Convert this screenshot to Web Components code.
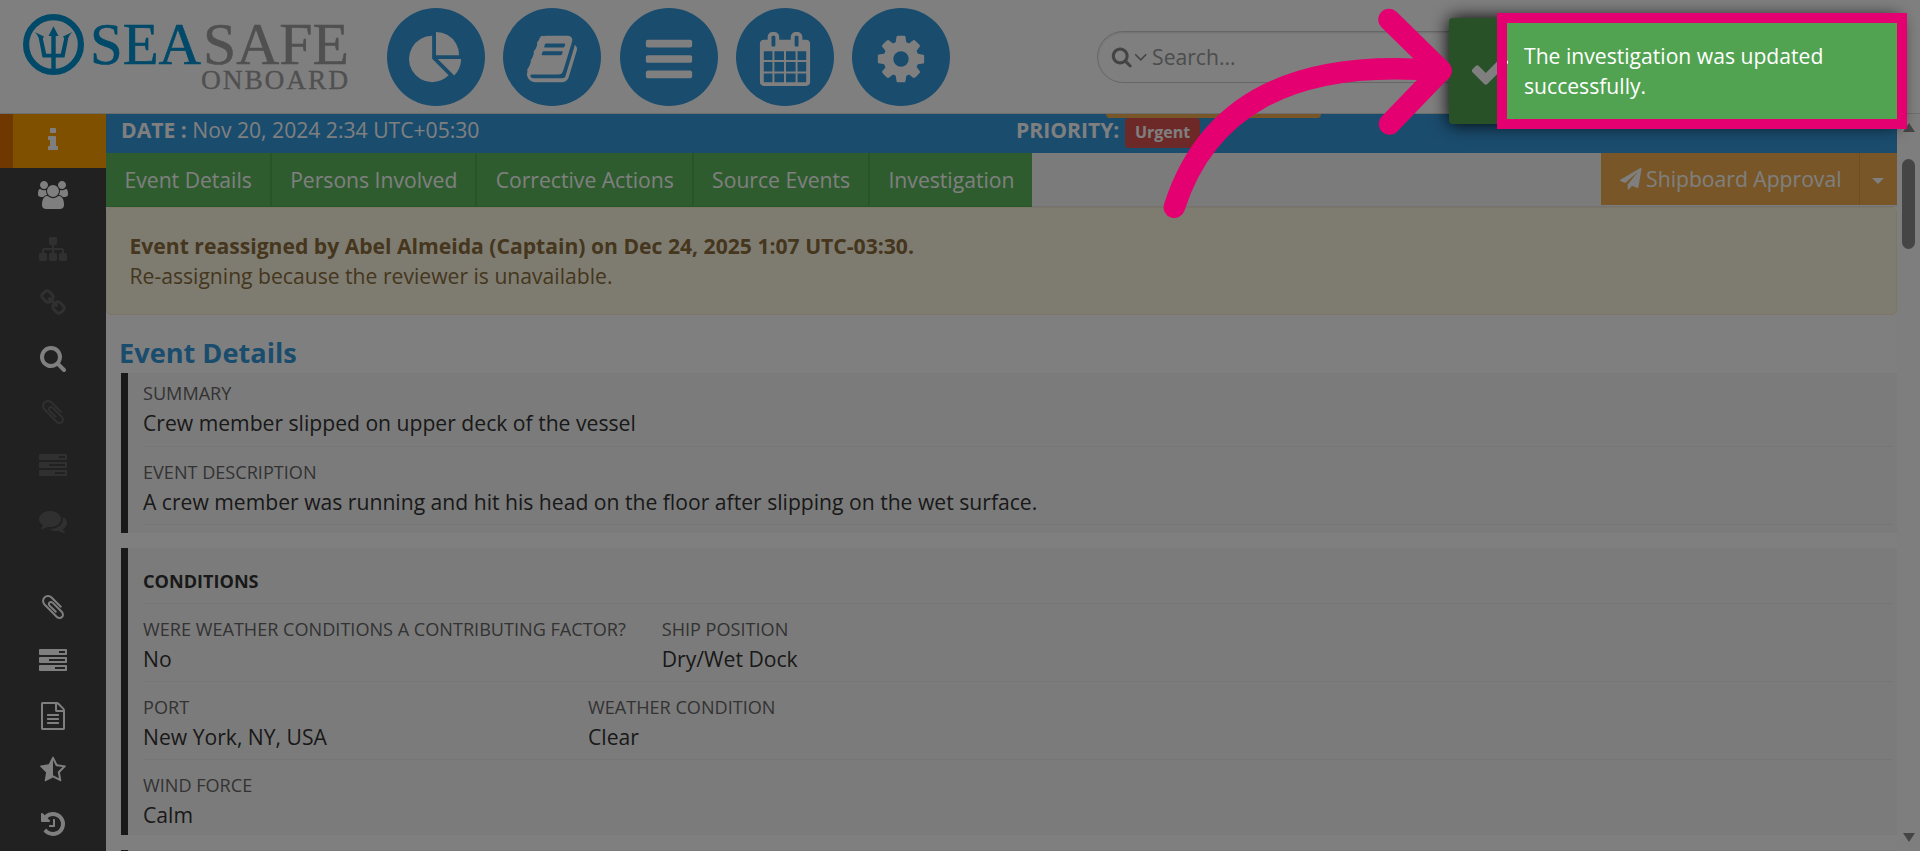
<!DOCTYPE html>
<html lang="en">
<head>
<meta charset="utf-8">
<title>SeaSafe Onboard</title>
<style>
  html, body {
    margin: 0;
    height: 100%;
    overflow: hidden;
  }
  body {
    font-family: "Open Sans", sans-serif;
    font-size: 21.13px;
    color: #333;
    background: #fff;
  }
</style>
</head>
<body>
<event-page></event-page>

<script>
// Icon outlines on a 1792 unit grid
const ICONS = {
  pie: 'M768 890l546 546q-106 108-247.5 168t-298.5 60q-209 0-385.5-103t-279.5-279.5-103-385.5 103-385.5 279.5-279.5 385.5-103v762zm187 6h773q0 157-60 298.5t-168 247.5zm709-128h-768v-768q209 0 385.5 103t279.5 279.5 103 385.5z',
  book: 'M1703 478q40 57 18 129l-275 906q-19 64-76.5 107.5t-122.5 43.5h-923q-77 0-148.5-53.5t-99.5-131.5q-24-67-2-127 0-4 3-27t4-37q1-8-3-21.5t-3-19.5q2-11 8-21t16.5-23.5 16.5-23.5q23-38 45-91.5t30-91.5q3-10 .5-30t-.5-28q3-11 17-28t17-23q21-36 42-92t25-90q1-9-2.5-32t.5-28q4-13 22-30.5t22-22.5q19-26 42.5-84.5t27.5-96.5q1-8-3-25.5t-2-26.5q2-8 9-18t18-23 17-21q8-12 16.5-30.5t15-35 16-36 19.5-32 26.5-23.5 36-11.5 47.5 5.5l-1 3q38-9 51-9h761q74 0 114 56t18 130l-274 906q-36 119-71.5 153.5t-128.5 34.5h-869q-27 0-38 15-11 16-1 43 24 70 144 70h923q29 0 56-15.5t35-41.5l300-987q7-22 5-57 38 15 59 43zm-1064 2q-4 13 2 22.5t20 9.5h608q13 0 25.5-9.5t16.5-22.5l21-64q4-13-2-22.5t-20-9.5h-608q-13 0-25.5 9.5t-16.5 22.5zm-83 256q-4 13 2 22.5t20 9.5h608q13 0 25.5-9.5t16.5-22.5l21-64q4-13-2-22.5t-20-9.5h-608q-13 0-25.5 9.5t-16.5 22.5z',
  bars: 'M1664 1344v128q0 26-19 45t-45 19h-1408q-26 0-45-19t-19-45v-128q0-26 19-45t45-19h1408q26 0 45 19t19 45zm0-512v128q0 26-19 45t-45 19h-1408q-26 0-45-19t-19-45v-128q0-26 19-45t45-19h1408q26 0 45 19t19 45zm0-512v128q0 26-19 45t-45 19h-1408q-26 0-45-19t-19-45v-128q0-26 19-45t45-19h1408q26 0 45 19t19 45z',
  calendar: 'M192 1664h288v-288h-288v288zm352 0h320v-288h-320v288zm-352-352h288v-320h-288v320zm352 0h320v-320h-320v320zm-352-384h288v-288h-288v288zm736 736h320v-288h-320v288zm-384-736h320v-288h-320v288zm768 736h288v-288h-288v288zm-384-352h320v-320h-320v320zm-352-864v-288q0-13-9.5-22.5t-22.5-9.5h-64q-13 0-22.5 9.5t-9.5 22.5v288q0 13 9.5 22.5t22.5 9.5h64q13 0 22.5-9.5t9.5-22.5zm736 864h288v-320h-288v320zm-384-384h320v-288h-320v288zm384 0h288v-288h-288v288zm32-480v-288q0-13-9.5-22.5t-22.5-9.5h-64q-13 0-22.5 9.5t-9.5 22.5v288q0 13 9.5 22.5t22.5 9.5h64q13 0 22.5-9.5t9.5-22.5zm384-64v1280q0 52-38 90t-90 38h-1408q-52 0-90-38t-38-90v-1280q0-52 38-90t90-38h128v-96q0-66 47-113t113-47h64q66 0 113 47t47 113v96h384v-96q0-66 47-113t113-47h64q66 0 113 47t47 113v96h128q52 0 90 38t38 90z',
  cog: 'M1152 896q0-106-75-181t-181-75-181 75-75 181 75 181 181 75 181-75 75-181zm512-109v222q0 12-8 23t-20 13l-185 28q-19 54-39 91 35 50 107 138 10 12 10 25t-9 23q-27 37-99 108t-94 71q-12 0-26-9l-138-108q-44 23-91 38-16 136-29 186-7 28-36 28h-222q-14 0-24.5-8.5t-11.5-21.5l-28-184q-49-16-90-37l-141 107q-10 9-25 9-14 0-25-11-126-114-165-168-7-10-7-23 0-12 8-23 15-21 51-66.5t54-70.5q-27-50-41-99l-183-27q-13-2-21-12.5t-8-23.5v-222q0-12 8-23t19-13l186-28q14-46 39-92-40-57-107-138-10-12-10-24 0-10 9-23 26-36 98.5-107.5t94.5-71.5q13 0 26 10l138 107q44-23 91-38 16-136 29-186 7-28 36-28h222q14 0 24.5 8.5t11.5 21.5l28 184q49 16 90 37l142-107q9-9 24-9 13 0 25 10 129 119 165 170 7 8 7 22 0 12-8 23-15 21-51 66.5t-54 70.5q26 50 41 98l183 28q13 2 21 12.5t8 23.5z',
  info: 'M1216 1344v128q0 26-19 45t-45 19h-512q-26 0-45-19t-19-45v-128q0-26 19-45t45-19h64v-384h-64q-26 0-45-19t-19-45v-128q0-26 19-45t45-19h384q26 0 45 19t19 45v576h64q26 0 45 19t19 45zm-128-1152v192q0 26-19 45t-45 19h-256q-26 0-45-19t-19-45v-192q0-26 19-45t45-19h256q26 0 45 19t19 45z',
  users: 'M529 896q-162 5-265 128h-134q-82 0-138-40.5t-56-118.5q0-353 124-353 6 0 43.5 21t97.5 42.5 119 21.5q67 0 133-23-5 37-5 66 0 139 81 256zm1071 637q0 120-73 189.5t-194 69.5h-874q-121 0-194-69.5t-73-189.5q0-53 3.5-103.5t14-109 26.5-108.5 43-97.5 62-81 85.5-53.5 111.5-20q10 0 43 21.5t73 48 107 48 135 21.5 135-21.5 107-48 73-48 43-21.5q61 0 111.5 20t85.5 53.5 62 81 43 97.5 26.5 108.5 14 109 3.5 103.5zm-1024-1277q0 106-75 181t-181 75-181-75-75-181 75-181 181-75 181 75 75 181zm704 384q0 159-112.5 271.5t-271.5 112.5-271.5-112.5-112.5-271.5 112.5-271.5 271.5-112.5 271.5 112.5 112.5 271.5zm576 225q0 78-56 118.5t-138 40.5h-134q-103-123-265-128 81-117 81-256 0-29-5-66 66 23 133 23 59 0 119-21.5t97.5-42.5 43.5-21q124 0 124 353zm-128-609q0 106-75 181t-181 75-181-75-75-181 75-181 181-75 181 75 75 181z',
  sitemap: 'M1792 1248v320q0 40-28 68t-68 28h-320q-40 0-68-28t-28-68v-320q0-40 28-68t68-28h96v-192h-512v192h96q40 0 68 28t28 68v320q0 40-28 68t-68 28h-320q-40 0-68-28t-28-68v-320q0-40 28-68t68-28h96v-192h-512v192h96q40 0 68 28t28 68v320q0 40-28 68t-68 28h-320q-40 0-68-28t-28-68v-320q0-40 28-68t68-28h96v-192q0-52 38-90t90-38h512v-192h-96q-40 0-68-28t-28-68v-320q0-40 28-68t68-28h320q40 0 68 28t28 68v320q0 40-28 68t-68 28h-96v192h512q52 0 90 38t38 90v192h96q40 0 68 28t28 68z',
  link: 'M1520 1216q0-40-28-68l-208-208q-28-28-68-28-42 0-72 32 3 3 19 18.5t21.5 21.5 15 19 13 25.5 3.5 27.5q0 40-28 68t-68 28q-15 0-27.5-3.5t-25.5-13-19-15-21.5-21.5-18.5-19q-33 31-33 73 0 40 28 68l206 207q27 27 68 27 40 0 68-26l147-146q28-28 28-67zm-703-705q0-40-28-68l-206-207q-28-28-68-28-39 0-68 27l-147 146q-28 28-28 67 0 40 28 68l208 208q27 27 68 27 42 0 72-31-3-3-19-18.5t-21.5-21.5-15-19-13-25.5-3.5-27.5q0-40 28-68t68-28q15 0 27.5 3.5t25.5 13 19 15 21.5 21.5 18.5 19q33-31 33-73zm895 705q0 120-85 203l-147 146q-83 83-203 83-121 0-204-85l-206-207q-83-83-83-203 0-123 88-209l-88-88q-86 88-208 88-120 0-204-84l-208-208q-84-84-84-204t85-203l147-146q83-83 203-83 121 0 204 85l206 207q83 83 83 203 0 123-88 209l88 88q86-88 208-88 120 0 204 84l208 208q84 84 84 204z',
  search: 'M1216 832q0-185-131.5-316.5t-316.5-131.5-316.5 131.5-131.5 316.5 131.5 316.5 316.5 131.5 316.5-131.5 131.5-316.5zm512 832q0 52-38 90t-90 38q-54 0-90-38l-343-342q-179 124-399 124-143 0-273.5-55.5t-225-150-150-225-55.5-273.5 55.5-273.5 150-225 225-150 273.5-55.5 273.5 55.5 225 150 150 225 55.5 273.5q0 220-124 399l343 343q37 37 37 90z',
  clip: 'M1596 1385q0 117-79 196t-196 79q-135 0-235-100l-777-776q-113-115-113-271 0-159 110-270t269-111q158 0 273 113l605 606q10 10 10 22 0 16-30.5 46.5t-46.5 30.5q-13 0-23-10l-606-607q-79-77-181-77-106 0-179 75t-73 181q0 105 76 181l776 777q63 63 145 63 64 0 106-42t42-106q0-82-63-145l-581-581q-26-24-60-24-29 0-48 19t-19 48q0 32 25 59l410 410q10 10 10 22 0 16-31 47t-47 31q-12 0-22-10l-410-410q-63-61-63-149 0-82 57-139t139-57q88 0 149 63l581 581q100 98 100 235z',
  tasks: 'M1024 1408h640v-128h-640v128zm-384-512h1024v-128h-1024v128zm640-512h384v-128h-384v128zm512 832v256q0 26-19 45t-45 19h-1664q-26 0-45-19t-19-45v-256q0-26 19-45t45-19h1664q26 0 45 19t19 45zm0-512v256q0 26-19 45t-45 19h-1664q-26 0-45-19t-19-45v-256q0-26 19-45t45-19h1664q26 0 45 19t19 45zm0-512v256q0 26-19 45t-45 19h-1664q-26 0-45-19t-19-45v-256q0-26 19-45t45-19h1664q26 0 45 19t19 45z',
  comments: 'M1408 768q0 139-94 257t-256.5 186.5-353.5 68.5q-86 0-176-16-124 88-278 128-36 9-86 16h-3q-11 0-20.5-8t-11.5-21q-1-3-1-6.5t.5-6.5 2-6l2.5-5 3.5-5.5 4-5 4.5-5 4-4.5q5-6 23-25t26-29.5 22.5-29 25-38.5 20.5-44q-124-72-195-177t-71-224q0-139 94-257t256.5-186.5 353.5-68.5 353.5 68.5 256.5 186.5 94 257zm384 256q0 120-71 224.5t-195 176.5q10 24 20.5 44t25 38.5 22.5 29 26 29.5 23 25q1 1 4 4.5t4.5 5 4 5 3.5 5.5l2.5 5 2 6 .5 6.5-1 6.5q-3 14-13 22t-22 7q-50-7-86-16-154-40-278-128-90 16-176 16-271 0-472-132 58 4 88 4 161 0 309-45t264-129q125-92 192-212t67-254q0-77-23-152 129 71 204 178t75 230z',
  file: 'M1596 380q28 28 48 76t20 88v1152q0 40-28 68t-68 28h-1344q-40 0-68-28t-28-68v-1600q0-40 28-68t68-28h896q40 0 88 20t76 48zm-444-244v376h376q-10-29-22-41l-313-313q-12-12-41-22zm384 1528v-1024h-416q-40 0-68-28t-28-68v-416h-768v1536h1280zm-1024-864q0-14 9-23t23-9h704q14 0 23 9t9 23v64q0 14-9 23t-23 9h-704q-14 0-23-9t-9-23v-64zm736 224q14 0 23 9t9 23v64q0 14-9 23t-23 9h-704q-14 0-23-9t-9-23v-64q0-14 9-23t23-9h704zm0 256q14 0 23 9t9 23v64q0 14-9 23t-23 9h-704q-14 0-23-9t-9-23v-64q0-14 9-23t23-9h704z',
  star: 'M1250 957l257-250-356-52-66-10-30-60-159-322v963l59 31 318 168-60-355-12-66zm452-262l-363 354 86 500q5 33-6 51.5t-34 18.5q-17 0-40-12l-449-236-449 236q-23 12-40 12-23 0-34-18.5t-6-51.5l86-500-364-354q-32-32-23-59.5t54-34.5l502-73 225-455q20-41 49-41 28 0 49 41l225 455 502 73q45 7 54 34.5t-24 59.5z',
  history: 'M1664 896q0 156-61 298t-164 245-245 164-298 61q-172 0-327-72.5t-264-204.5q-7-10-6.5-22.5t8.5-20.5l137-138q10-9 25-9 16 2 23 12 73 95 179 147t225 52q104 0 198.5-40.5t163.5-109.5 109.5-163.5 40.5-198.5-40.5-198.5-109.5-163.5-163.5-109.5-198.5-40.5q-98 0-188 35.5t-160 101.5l137 138q31 30 14 69-17 40-59 40h-448q-26 0-45-19t-19-45v-448q0-42 40-59 39-17 69 14l130 129q107-101 244.5-156.5t284.5-55.5q156 0 298 61t245 164 164 245 61 298zm-640-288v448q0 14-9 23t-23 9h-320q-14 0-23-9t-9-23v-64q0-14 9-23t23-9h224v-352q0-14 9-23t23-9h64q14 0 23 9t9 23z',
  plane: 'M1764 11q33 24 27 64l-256 1536q-5 29-32 45-14 8-31 8-11 0-24-5l-453-185-242 295q-18 23-49 23-13 0-22-4-19-7-30.5-23.5t-11.5-36.5v-349l864-1059-1069 925-395-162q-37-14-40-55-2-40 32-59l1664-960q15-9 32-9 20 0 36 11z',
  check: 'M1671 566q0 40-28 68l-724 724-136 136q-28 28-68 28t-68-28l-136-136-362-362q-28-28-28-68t28-68l136-136q28-28 68-28t68 28l294 295 656-657q28-28 68-28t68 28l136 136q28 28 28 68z',
  angle: 'M1395 736q0 13-10 23l-466 466q-10 10-23 10t-23-10l-466-466q-10-10-10-23t10-23l50-50q10-10 23-10t23 10l393 393 393-393q10-10 23-10t23 10l50 50q10 10 10 23z'
};

// Small helper so each element only declares its markup
class BaseElement extends HTMLElement {
  constructor() {
    super();
    this.attachShadow({ mode: 'open' });
  }

  connectedCallback() {
    this.shadowRoot.innerHTML = this.getTemplate();
  }
}

class SvgIcon extends BaseElement {
  getTemplate() {
    return `
      <style>
        :host { display: block; width: 1em; height: 1em; flex: none; }
        svg { display: block; width: 100%; height: 100%; overflow: visible; }
      </style>
      <svg viewBox="0 0 1792 1792" fill="currentColor"><path d="${ICONS[this.getAttribute('name')]}"/></svg>
    `;
  }
}

class BrandLogo extends BaseElement {
  getTemplate() {
    return `
      <style>
        :host { display: block; width: 330px; height: 80px; }
        svg { display: block; overflow: visible; }
        text { font-family: "Liberation Serif", serif; }
      </style>
      <svg width="330" height="80" viewBox="20 12 330 80">
        <circle cx="53.5" cy="44.5" r="27.4" fill="none" stroke="#0093d0" stroke-width="6.2"/>
        <g fill="#0093d0">
          <path d="M51.300 31h4.400v42h-4.400z"/>
          <path d="M53.500 26.300l5 9.700h-10z"/>
          <path d="M34.500 32l9.500 4.500-1.200 2 3.400 15.300h14.600l3.400-15.300-1.200-2 9.500-4.500q-4 3.500-4.600 8l-3.400 17.500h-22l-3.400-17.500q-.6-4.500-4.600-8z"/>
        </g>
        <text x="90" y="64" font-size="59" textLength="111" lengthAdjust="spacingAndGlyphs" fill="#0093d0" stroke="#0093d0" stroke-width=".6">SEA</text>
        <text x="203" y="64" font-size="59" textLength="146" lengthAdjust="spacingAndGlyphs" fill="#a0a0a0" stroke="#a0a0a0" stroke-width=".5">SAFE</text>
        <text x="201" y="88.500" font-size="27.500" textLength="147" fill="#a0a0a0" stroke="#a0a0a0" stroke-width=".3">ONBOARD</text>
      </svg>
    `;
  }
}

class NavButton extends BaseElement {
  getTemplate() {
    return `
      <style>
        :host {
          display: flex;
          align-items: center;
          justify-content: center;
          box-sizing: border-box;
          width: 98px;
          height: 98px;
          padding-top: 3px;
          border-radius: 50%;
          background: #3598dc;
          color: #fff;
          font-size: 54px;
        }
      </style>
      <svg-icon name="${this.getAttribute('icon')}"></svg-icon>
    `;
  }
}

class SearchBox extends BaseElement {
  getTemplate() {
    return `
      <style>
        :host {
          display: flex;
          align-items: center;
          box-sizing: border-box;
          width: 560px;
          height: 52px;
          padding-left: 13px;
          border: 1px solid #ccc;
          border-radius: 26px;
          box-shadow: inset 0 1px 2px rgba(0, 0, 0, .12);
          color: #999;
        }
        .find { font-size: 21.5px; color: #888; }
        .more { font-size: 21.5px; margin-left: -3px; color: #888; }
        span { margin: -2px 0 0 1px; }
      </style>
      <svg-icon class="find" name="search"></svg-icon>
      <svg-icon class="more" name="angle"></svg-icon>
      <span>Search...</span>
    `;
  }
}

class AppHeader extends BaseElement {
  getTemplate() {
    return `
      <style>
        :host {
          display: flex;
          align-items: flex-start;
          box-sizing: border-box;
          height: 114px;
          padding-left: 20px;
          border-bottom: 1px solid #ddd;
          background: #fff;
        }
        brand-logo { margin-top: 12px; }
        nav { display: flex; gap: 18.200px; margin: 8px 0 0 37.300px; }
        search-box { margin: 31px 0 0 147px; }
      </style>
      <brand-logo></brand-logo>
      <nav>
        <nav-button icon="pie"></nav-button>
        <nav-button icon="book"></nav-button>
        <nav-button icon="bars"></nav-button>
        <nav-button icon="calendar"></nav-button>
        <nav-button icon="cog"></nav-button>
      </nav>
      <search-box></search-box>
    `;
  }
}

class SideItem extends BaseElement {
  getTemplate() {
    return `
      <style>
        :host {
          display: flex;
          align-items: center;
          justify-content: center;
          box-sizing: border-box;
          height: 54.330px;
          padding-bottom: 1.500px;
          color: #fff;
          font-size: 28px;
        }
        :host([active]) {
          height: 54px;
          margin-bottom: .330px;
          background: linear-gradient(90deg, #df7000 13px, #ffa000 13px);
        }
        :host([disabled]) { color: #606060; }
      </style>
      <svg-icon name="${this.getAttribute('icon')}"></svg-icon>
    `;
  }
}

class SideBar extends BaseElement {
  getTemplate() {
    return `
      <style>
        :host {
          display: block;
          box-sizing: border-box;
          width: 106px;
          flex: none;
          background: #424242;
        }
        .gap { height: 32px; }
      </style>
      <side-item icon="info" active></side-item>
      <side-item icon="users"></side-item>
      <side-item icon="sitemap" disabled></side-item>
      <side-item icon="link" disabled></side-item>
      <side-item icon="search"></side-item>
      <side-item icon="clip" disabled></side-item>
      <side-item icon="tasks" disabled></side-item>
      <side-item icon="comments" disabled></side-item>
      <div class="gap"></div>
      <side-item icon="clip"></side-item>
      <side-item icon="tasks"></side-item>
      <side-item icon="file"></side-item>
      <side-item icon="star"></side-item>
      <side-item icon="history"></side-item>
    `;
  }
}

class InfoBar extends BaseElement {
  getTemplate() {
    return `
      <style>
        :host {
          display: grid;
          grid-template-columns: 895px 1fr;
          box-sizing: border-box;
          position: relative;
          height: 39px;
          padding: 1px 0 0 15px;
          background: #3598dc;
          color: #fff;
          line-height: 30px;
        }
        .priority { display: flex; }
        .badge {
          height: 30px;
          margin: 3px 0 0 5.500px;
          padding: 0 10px;
          border-radius: 4px;
          background: #d9534f;
          font-size: 16px;
          font-weight: 700;
          line-height: 28px;
        }
        /* lower edge of the status pill scrolled under the header */
        .pill {
          position: absolute;
          top: 0;
          left: 1000px;
          width: 215px;
          height: 4px;
          border-radius: 0 0 5px 5px;
          background: #f0ad4e;
        }
      </style>
      <div class="pill"></div>
      <div><b>DATE :</b> Nov 20, 2024 2:34 UTC+05:30</div>
      <div class="priority"><b>PRIORITY:</b><span class="badge">Urgent</span></div>
    `;
  }
}

class TabBar extends BaseElement {
  getTemplate() {
    return `
      <style>
        :host {
          display: flex;
          box-sizing: border-box;
          height: 54px;
          border-bottom: 1px solid #e7e7e7;
          background: #f6f6f6;
          color: #fff;
        }
        .tab {
          box-sizing: border-box;
          height: 54px;
          padding: 0 17.800px 0 18.500px;
          border-right: 2px solid #50a850;
          border-bottom: 1px solid #4cae4c;
          background: #5cb85c;
          line-height: 53px;
          white-space: nowrap;
        }
        .tab:nth-of-type(5) { border-right: 0; }
        .action {
          display: flex;
          align-items: center;
          height: 52px;
          margin-left: auto;
          background: #f0ad4e;
        }
        .action svg-icon { margin-left: 18.500px; font-size: 21.500px; }
        .action span { margin: -2px 0 0 5px; }
        .caret {
          display: flex;
          align-items: center;
          justify-content: center;
          box-sizing: border-box;
          width: 38px;
          height: 100%;
          margin-left: 17.500px;
          border-left: 1px solid #e09b3a;
        }
        .caret::before {
          content: "";
          border: 6px solid transparent;
          border-top-color: #fff;
          border-bottom: 0;
          margin: 3px 2px 0 0;
        }
      </style>
      <div class="tab">Event Details</div>
      <div class="tab">Persons Involved</div>
      <div class="tab">Corrective Actions</div>
      <div class="tab">Source Events</div>
      <div class="tab">Investigation</div>
      <section class="action">
        <svg-icon name="plane"></svg-icon><span>Shipboard Approval</span>
        <i class="caret"></i>
      </section>
    `;
  }
}

class NoticeBox extends BaseElement {
  getTemplate() {
    return `
      <style>
        :host {
          display: block;
          box-sizing: border-box;
          height: 108px;
          padding: 23px 22.500px;
          border: 1px solid #faebcc;
          border-radius: 5px;
          background: #fcf8e3;
          color: #8a6d3b;
          line-height: 30px;
        }
      </style>
      <b><slot name="title"></slot></b>
      <div><slot></slot></div>
    `;
  }
}

class FieldItem extends BaseElement {
  getTemplate() {
    return `
      <style>
        :host { display: block; white-space: nowrap; }
        .label { font-size: 18.100px; line-height: 26px; color: #666; text-transform: uppercase; }
        .value { line-height: 34px; }
      </style>
      <div class="label">${this.getAttribute('label')}</div>
      <div class="value"><slot></slot></div>
    `;
  }
}

class FieldRow extends BaseElement {
  getTemplate() {
    return `
      <style>
        :host {
          display: flex;
          box-sizing: border-box;
          height: 78px;
          padding-top: 12px;
          border-bottom: 1px solid #ececec;
        }
        :host([first]) { height: 74px; padding-top: 6.500px; }
        :host([last]) { height: 75px; border-bottom: 0; }
      </style>
      <slot></slot>
    `;
  }
}

class FieldPanel extends BaseElement {
  getTemplate() {
    const heading = this.getAttribute('heading');
    return `
      <style>
        :host {
          display: block;
          box-sizing: border-box;
          min-height: 40px;
          margin: 0 0 15px 15px;
          padding: 0 4px 0 15px;
          border-left: 7px solid #333;
          background: #f7f7f7;
        }
        h4 {
          box-sizing: border-box;
          height: 56px;
          margin: 0;
          padding-top: 20px;
          border-bottom: 1px solid #ececec;
          font-size: 18.100px;
          line-height: 26px;
        }
      </style>
      ${heading ? `<h4>${heading}</h4>` : ''}
      <slot></slot>
    `;
  }
}

class ScrollRail extends BaseElement {
  getTemplate() {
    return `
      <style>
        :host {
          display: flex;
          flex-direction: column;
          align-items: center;
          box-sizing: border-box;
          width: 23px;
          flex: none;
          padding: 9px 0;
          background: #fcfcfc;
        }
        i { border: 6px solid transparent; }
        .up { border-top: 0; border-bottom: 9px solid #8b8b8b; }
        .down { border-bottom: 0; border-top: 9px solid #8b8b8b; margin-top: auto; }
        .thumb {
          width: 13px;
          height: 90px;
          margin-top: 27px;
          border-radius: 7px;
          background: #8b8b8b;
        }
      </style>
      <i class="up"></i>
      <div class="thumb"></div>
      <i class="down"></i>
    `;
  }
}

class ToastMessage extends BaseElement {
  getTemplate() {
    return `
      <style>
        :host {
          display: flex;
          box-sizing: border-box;
          position: absolute;
          top: 18px;
          left: 1449px;
          width: 450px;
          height: 106px;
          padding: 23px 20px;
          border-radius: 4px;
          background: #51a351;
          box-shadow: 0 0 18px #000;
          color: #fff;
          line-height: 30px;
        }
        svg-icon { margin-top: 8px; font-size: 42px; }
        div { width: 330px; margin-left: 13px; }
      </style>
      <svg-icon name="check"></svg-icon>
      <div><slot></slot></div>
    `;
  }
}

// Pointer arrow plus a frame that dims everything outside of it
class SpotLight extends BaseElement {
  getTemplate() {
    return `
      <style>
        :host {
          display: block;
          position: absolute;
          inset: 0;
          overflow: hidden;
        }
        .frame {
          box-sizing: border-box;
          position: absolute;
          top: 13px;
          left: 1497px;
          width: 410px;
          height: 116px;
          border: 10px solid #e50071;
          box-shadow: 0 0 0 2000px rgba(0, 0, 0, .5);
        }
        svg { position: absolute; top: 0; left: 0; }
      </style>
      <div class="frame"></div>
      <svg width="1920" height="851" fill="none" stroke="#e50071" stroke-width="21.500" stroke-linecap="round" stroke-linejoin="round">
        <path d="M1174.300 207.300C1205 112 1285 57 1441 71"/>
        <path d="M1389 19.500L1441 70.500L1389.500 124"/>
      </svg>
    `;
  }
}

class EventPage extends BaseElement {
  getTemplate() {
    return `
      <style>
        :host {
          display: flex;
          flex-direction: column;
          position: relative;
          width: 1920px;
          height: 851px;
          overflow: hidden;
        }
        .body { display: flex; flex: 1; min-height: 0; }
        main { flex: 1; min-width: 0; overflow: hidden; }
        h2 {
          margin: 20px 4px 2px 13px;
          font-size: 27.150px;
          line-height: 36px;
          color: #3598dc;
        }
        .first { padding-bottom: 8px; margin-top: 0; }
        .wide { margin-left: 36px; }
        .half { width: 445px; }
      </style>
      <app-header></app-header>
      <div class="body">
        <side-bar></side-bar>
        <main>
          <info-bar></info-bar>
          <tab-bar></tab-bar>
          <notice-box>
            <span slot="title">Event reassigned by Abel Almeida (Captain) on Dec 24, 2025 1:07 UTC-03:30.</span>
            Re-assigning because the reviewer is unavailable.
          </notice-box>
          <h2>Event Details</h2>
          <field-panel class="first">
            <field-row first><field-item label="Summary">Crew member slipped on upper deck of the vessel</field-item></field-row>
            <field-row><field-item label="Event Description">A crew member was running and hit his head on the floor after slipping on the wet surface.</field-item></field-row>
          </field-panel>
          <field-panel heading="CONDITIONS">
            <field-row>
              <field-item label="Were weather conditions a contributing factor?">No</field-item>
              <field-item class="wide" label="Ship Position">Dry/Wet Dock</field-item>
            </field-row>
            <field-row>
              <field-item class="half" label="Port">New York, NY, USA</field-item>
              <field-item label="Weather Condition">Clear</field-item>
            </field-row>
            <field-row last><field-item label="Wind Force">Calm</field-item></field-row>
          </field-panel>
          <field-panel></field-panel>
        </main>
        <scroll-rail></scroll-rail>
      </div>
      <toast-message>The investigation was updated successfully.</toast-message>
      <spot-light></spot-light>
    `;
  }
}

customElements.define('svg-icon', SvgIcon);
customElements.define('brand-logo', BrandLogo);
customElements.define('nav-button', NavButton);
customElements.define('search-box', SearchBox);
customElements.define('app-header', AppHeader);
customElements.define('side-item', SideItem);
customElements.define('side-bar', SideBar);
customElements.define('info-bar', InfoBar);
customElements.define('tab-bar', TabBar);
customElements.define('notice-box', NoticeBox);
customElements.define('field-item', FieldItem);
customElements.define('field-row', FieldRow);
customElements.define('field-panel', FieldPanel);
customElements.define('scroll-rail', ScrollRail);
customElements.define('toast-message', ToastMessage);
customElements.define('spot-light', SpotLight);
customElements.define('event-page', EventPage);
</script>
</body>
</html>
